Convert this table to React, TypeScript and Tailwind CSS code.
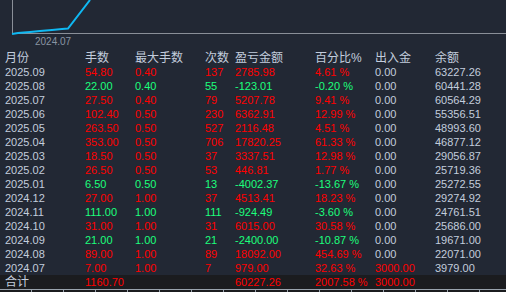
import React from "react"

type Row = {
  month: string
  lots: string
  maxLots: string
  count: string
  pnl: string
  pct: string
  flow: string
  balance: string
}

const rows: Row[] = [
  { month: "2025.09", lots: "54.80", maxLots: "0.40", count: "137", pnl: "2785.98", pct: "4.61 %", flow: "0.00", balance: "63227.26" },
  { month: "2025.08", lots: "22.00", maxLots: "0.40", count: "55", pnl: "-123.01", pct: "-0.20 %", flow: "0.00", balance: "60441.28" },
  { month: "2025.07", lots: "27.50", maxLots: "0.40", count: "79", pnl: "5207.78", pct: "9.41 %", flow: "0.00", balance: "60564.29" },
  { month: "2025.06", lots: "102.40", maxLots: "0.50", count: "230", pnl: "6362.91", pct: "12.99 %", flow: "0.00", balance: "55356.51" },
  { month: "2025.05", lots: "263.50", maxLots: "0.50", count: "527", pnl: "2116.48", pct: "4.51 %", flow: "0.00", balance: "48993.60" },
  { month: "2025.04", lots: "353.00", maxLots: "0.50", count: "706", pnl: "17820.25", pct: "61.33 %", flow: "0.00", balance: "46877.12" },
  { month: "2025.03", lots: "18.50", maxLots: "0.50", count: "37", pnl: "3337.51", pct: "12.98 %", flow: "0.00", balance: "29056.87" },
  { month: "2025.02", lots: "26.50", maxLots: "0.50", count: "53", pnl: "446.81", pct: "1.77 %", flow: "0.00", balance: "25719.36" },
  { month: "2025.01", lots: "6.50", maxLots: "0.50", count: "13", pnl: "-4002.37", pct: "-13.67 %", flow: "0.00", balance: "25272.55" },
  { month: "2024.12", lots: "27.00", maxLots: "1.00", count: "37", pnl: "4513.41", pct: "18.23 %", flow: "0.00", balance: "29274.92" },
  { month: "2024.11", lots: "111.00", maxLots: "1.00", count: "111", pnl: "-924.49", pct: "-3.60 %", flow: "0.00", balance: "24761.51" },
  { month: "2024.10", lots: "31.00", maxLots: "1.00", count: "31", pnl: "6015.00", pct: "30.58 %", flow: "0.00", balance: "25686.00" },
  { month: "2024.09", lots: "21.00", maxLots: "1.00", count: "21", pnl: "-2400.00", pct: "-10.87 %", flow: "0.00", balance: "19671.00" },
  { month: "2024.08", lots: "89.00", maxLots: "1.00", count: "89", pnl: "18092.00", pct: "454.69 %", flow: "0.00", balance: "22071.00" },
  { month: "2024.07", lots: "7.00", maxLots: "1.00", count: "7", pnl: "979.00", pct: "32.63 %", flow: "3000.00", balance: "3979.00" },
]

const grid = "grid grid-cols-[80px_50px_70px_30px_80px_60px_60px_1fr] pl-[5px] h-[14px] items-center whitespace-nowrap"

export default function App() {
  return (
    <div
      className="w-[506px] h-[292px] overflow-hidden bg-[#222834] text-[11px] leading-[14px] text-[#c3cddd]"
      style={{ fontFamily: '"Liberation Sans", "Noto Sans CJK SC", sans-serif' }}
    >
      {/* equity curve, cropped at the top */}
      <svg width="506" height="51" className="block">
        <line x1="12.5" y1="0" x2="12.5" y2="33.5" stroke="#8a8f98" strokeWidth="1" />
        <line x1="12" y1="33.5" x2="506" y2="33.5" stroke="#8a8f98" strokeWidth="1" />
        <polyline
          points="12,34 18,33 30,32 40,31 52,30 62,29 68,28.5 90,0"
          fill="none"
          stroke="#0fb8f2"
          strokeWidth="2"
        />
        <text x="35" y="45" fill="#8a94a3" fontSize="10">2024.07</text>
      </svg>

      <div className={grid + " text-[12px]"}>
        <span>月份</span>
        <span>手数</span>
        <span>最大手数</span>
        <span>次数</span>
        <span>盈亏金额</span>
        <span>百分比%</span>
        <span>出入金</span>
        <span>余额</span>
      </div>

      {rows.map((r) => {
        const c = r.pnl.startsWith("-") ? "text-[#1cff7c]" : "text-[#ff0000]"
        return (
          <div key={r.month} className={grid}>
            <span>{r.month}</span>
            <span className={c}>{r.lots}</span>
            <span className={c}>{r.maxLots}</span>
            <span className={c}>{r.count}</span>
            <span className={c}>{r.pnl}</span>
            <span className={c}>{r.pct}</span>
            <span className={r.flow === "0.00" ? "" : "text-[#ff0000]"}>{r.flow}</span>
            <span>{r.balance}</span>
          </div>
        )
      })}

      <div className={grid + " bg-[#1b1c1f] text-[#ff0000]"}>
        <span className="text-[12px] text-[#c3cddd]">合计</span>
        <span>1160.70</span>
        <span></span>
        <span></span>
        <span>60227.26</span>
        <span>2007.58 %</span>
        <span>3000.00</span>
        <span></span>
      </div>

      <div className="flex h-[4px] border-t border-[#9aa3ad] bg-[#1b1c1f]">
        {Array.from({ length: 16 }).map((_, i) => (
          <div key={i} className="w-[32px] shrink-0 border-r border-[#9aa3ad]" />
        ))}
      </div>
    </div>
  )
}
